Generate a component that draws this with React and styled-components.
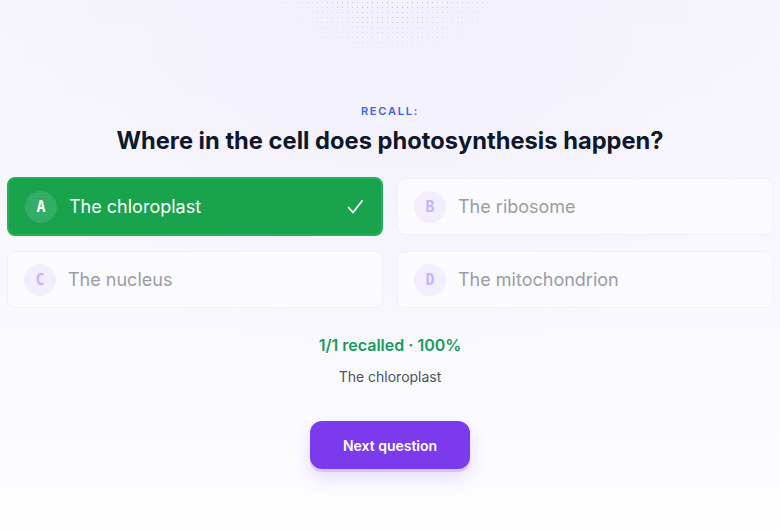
import React from "react";
import styled, { createGlobalStyle } from "styled-components";

const Global = createGlobalStyle`
  html, body { margin: 0; padding: 0; }
  body {
    font-family: Inter, "Noto Sans", sans-serif;
    background: #f7f6fd;
    -webkit-font-smoothing: antialiased;
  }
`;

const Page = styled.div`
  position: relative;
  width: 780px;
  height: 530px;
  overflow: hidden;
  box-sizing: border-box;
  padding: 103px 7px 0;
  background:
    radial-gradient(ellipse 420px 360px at 50% 0%, #f2f0fb 0%, rgba(243,241,251,0.6) 55%, rgba(250,249,255,0) 100%),
    linear-gradient(180deg, #f5f4fc 0%, #f9f8fe 60%, #fdfdff 100%);
  &::before {
    content: "";
    position: absolute;
    left: 270px;
    top: -10px;
    width: 240px;
    height: 70px;
    background-image: radial-gradient(circle, rgba(150,140,200,0.45) 0.6px, transparent 0.9px);
    background-size: 5px 5px;
    -webkit-mask-image: radial-gradient(ellipse 120px 65px at 50% 0%, #000 40%, transparent 100%);
    mask-image: radial-gradient(ellipse 120px 65px at 50% 0%, #000 40%, transparent 100%);
    pointer-events: none;
  }
`;

const Eyebrow = styled.div`
  text-align: center;
  font-size: 11px;
  font-weight: 600;
  letter-spacing: 1.8px;
  color: #3b63ea;
  line-height: 16px;
`;

const Question = styled.h1`
  margin: 7px 0 0;
  text-align: center;
  font-size: 23.7px;
  font-weight: 700;
  color: #0f172a;
  line-height: 30px;
  letter-spacing: 0;
`;

const Grid = styled.div`
  margin-top: 21px;
  display: grid;
  grid-template-columns: 1fr 1fr;
  column-gap: 14px;
  row-gap: 14px;
`;

const Card = styled.div`
  box-sizing: border-box;
  height: ${p => (p.$selected ? "59px" : "57px")};
  margin-top: ${p => (p.$selected ? "0" : "1px")};
  display: flex;
  align-items: center;
  padding: 0 16px;
  border-radius: 8px;
  border: ${p => (p.$selected ? "2px solid #22b35a" : "1px solid #f1eff9")};
  background: ${p => (p.$selected ? "#19a34c" : "#fbfaff")};
  color: ${p => (p.$selected ? "#ffffff" : "#9a9ca8")};
`;

const Badge = styled.div`
  width: 32px;
  height: 32px;
  border-radius: 50%;
  flex: none;
  display: flex;
  align-items: center;
  justify-content: center;
  font-family: "DejaVu Sans Mono", "Liberation Mono", monospace;
  font-weight: 700;
  font-size: 15px;
  color: ${p => (p.$selected ? "#ffffff" : "#c7b3fb")};
  background: ${p =>
    p.$selected
      ? "radial-gradient(circle, rgba(120,90,140,0.35) 0.6px, transparent 0.9px) 0 0/3px 3px, #2fb065"
      : "#f2eefd"};
`;

const Label = styled.span`
  margin-left: 12px;
  font-size: 18px;
  font-weight: 400;
  flex: 1;
`;

const Check = styled.svg`
  width: 20px;
  height: 20px;
`;

const Result = styled.div`
  margin-top: 27px;
  text-align: center;
  font-size: 16px;
  font-weight: 600;
  color: #179a60;
  line-height: 20px;
`;

const Answer = styled.div`
  margin-top: 13px;
  text-align: center;
  font-size: 14px;
  color: #4b5262;
  line-height: 18px;
`;

const ButtonRow = styled.div`
  display: flex;
  justify-content: center;
  margin-top: 35px;
`;

const Button = styled.button`
  width: 160px;
  height: 48px;
  border: none;
  border-radius: 12px;
  background: #7c3aed;
  color: #fff;
  font-family: Inter, sans-serif;
  font-weight: 600;
  font-size: 14px;
  box-shadow: 0 8px 18px rgba(124, 58, 237, 0.18), 0 3px 0 rgba(200, 190, 240, 0.5);
  cursor: pointer;
`;

const options = [
  { key: "A", text: "The chloroplast", selected: true },
  { key: "B", text: "The ribosome" },
  { key: "C", text: "The nucleus" },
  { key: "D", text: "The mitochondrion" },
];

export default function App() {
  return (
    <>
      <Global />
      <Page>
        <Eyebrow>RECALL:</Eyebrow>
        <Question>Where in the cell does photosynthesis happen?</Question>
        <Grid>
          {options.map(o => (
            <Card key={o.key} $selected={o.selected}>
              <Badge $selected={o.selected}>{o.key}</Badge>
              <Label>{o.text}</Label>
              {o.selected && (
                <Check viewBox="0 0 20 20" fill="none" stroke="#fff" strokeWidth="1.8" strokeLinecap="round" strokeLinejoin="round">
                  <path d="M3.5 10.5l4.5 5L17 4" />
                </Check>
              )}
            </Card>
          ))}
        </Grid>
        <Result>1/1 recalled · 100%</Result>
        <Answer>The chloroplast</Answer>
        <ButtonRow>
          <Button>Next question</Button>
        </ButtonRow>
      </Page>
    </>
  );
}
